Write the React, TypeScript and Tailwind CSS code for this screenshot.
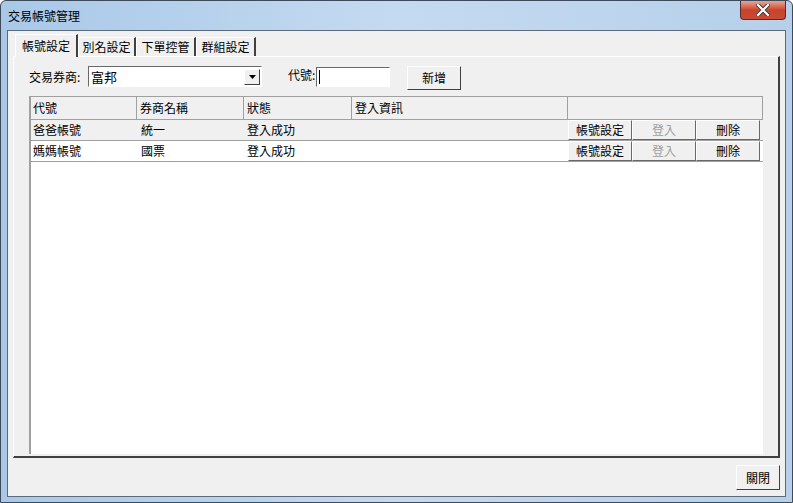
import React from "react";

const font = { fontFamily: '"Noto Sans CJK TC", "Noto Sans", sans-serif' };

const rows = [
  { id: "爸爸帳號", broker: "統一", status: "登入成功", bg: "bg-[#f0f0f0]" },
  { id: "媽媽帳號", broker: "國票", status: "登入成功", bg: "bg-white" },
];

const tabs = [
  { text: "帳號設定", w: "w-[63px]", active: true },
  { text: "別名設定", w: "w-[58px]" },
  { text: "下單控管", w: "w-[60px]" },
  { text: "群組設定", w: "w-[60px]" },
];

const RowButton = ({ text, disabled }: { text: string; disabled?: boolean }) => (
  <div
    className={`w-[64px] h-[20px] flex items-center justify-center bg-[#f0f0f0] border border-t-white border-l-white border-r-[#696969] border-b-[#696969] text-[12px] ${
      disabled ? "text-[#a0a0a0]" : "text-black"
    }`}
  >
    {text}
  </div>
);

export default function App() {
  return (
    <div style={font} className="w-[793px] h-[503px] flex flex-col bg-gradient-to-r from-[#a9c8e8] via-[#c4daf0] to-[#b6d0ea] rounded-t-[6px] border border-[#3c4a5a] overflow-hidden text-black">
      {/* Title bar */}
      <div className="h-[29px] flex items-start justify-between">
        <div className="pl-[7px] pt-[6px] text-[12px] text-black">交易帳號管理</div>
        <div className="mr-[6px] w-[46px] h-[19px] rounded-b-[4px] border border-t-0 border-[#5a2a2a] bg-gradient-to-b from-[#e8a595] via-[#c9432c] to-[#c74a35] flex items-center justify-center">
          <svg width="14" height="12" viewBox="0 0 14 12">
            <path d="M2 1 L12 11 M12 1 L2 11" stroke="#3a3a3a" strokeWidth="4" strokeLinecap="square" />
            <path d="M2 1 L12 11 M12 1 L2 11" stroke="white" strokeWidth="2.2" strokeLinecap="square" />
          </svg>
        </div>
      </div>

      {/* Client area */}
      <div className="flex-1 mx-[6px] mb-[5px] bg-[#f0f0f0] border border-[#5a6b7d] flex flex-col px-[5px] pt-[2px]">
        {/* Tab strip */}
        <div className="h-[23px] flex items-end pl-[2px]">
          {tabs.map((t) =>
            t.active ? (
              <div key={t.text} className={`${t.w} h-[23px] flex items-center justify-center bg-[#f0f0f0] border-t border-l border-white border-r-2 border-r-[#404040] relative z-10 -mb-px text-[12px]`}>
                {t.text}
              </div>
            ) : (
              <div key={t.text} className={`${t.w} h-[19px] mt-[3px] flex items-center justify-center bg-[#f0f0f0] border-t border-l border-white border-r-2 border-r-[#404040] text-[12px]`}>
                {t.text}
              </div>
            )
          )}
        </div>

        {/* Tab panel */}
        <div className="h-[402px] border-t border-l border-white border-r-2 border-b-2 border-r-[#404040] border-b-[#404040] flex flex-col pl-[15px] pr-[14px]">
          {/* Form row */}
          <div className="h-[39px] flex items-center text-[12px]">
            <span className="w-[59px] pt-[1px]">交易券商:</span>
            <div className="w-[174px] h-[21px] bg-white border border-t-[#696969] border-l-[#696969] border-r-white border-b-white flex items-center justify-between pl-[2px] pr-[1px]">
              <span className="text-[13px]">富邦</span>
              <div className="w-[16px] h-[16px] bg-[#f0f0f0] border border-t-white border-l-white border-r-[#404040] border-b-[#404040] flex items-center justify-center">
                <svg width="7" height="4" viewBox="0 0 7 4">
                  <path d="M0 0 H7 L3.5 4 Z" fill="black" />
                </svg>
              </div>
            </div>
            <span className="ml-[26px] w-[28px] pb-[3px]">代號:</span>
            <div className="w-[74px] h-[20px] bg-white border border-t-[#696969] border-l-[#696969] border-r-white border-b-white flex items-center pl-[2px]">
              <div className="w-px h-[14px] bg-black" />
            </div>
            <div className="ml-[17px] mt-[3px] w-[54px] h-[24px] bg-[#f0f0f0] border border-t-white border-l-white border-r-[#404040] border-b-[#404040] flex items-center justify-center text-[12px]">
              新增
            </div>
          </div>

          {/* Grid */}
          <div className="w-[734px] h-[358px] bg-white border-l-2 border-[#a0a0a0] flex flex-col text-[12px]">
            <div className="h-[24px] flex bg-[#f0f0f0] border-y border-[#a0a0a0]">
              <div className="w-[106px] border-r border-[#a0a0a0] pl-[2px] flex items-center">代號</div>
              <div className="w-[107px] border-r border-[#a0a0a0] pl-[3px] flex items-center">券商名稱</div>
              <div className="w-[108px] border-r border-[#a0a0a0] pl-[3px] flex items-center">狀態</div>
              <div className="w-[216px] border-r border-[#a0a0a0] pl-[3px] flex items-center">登入資訊</div>
              <div className="flex-1 border-r border-[#a0a0a0]" />
            </div>
            {rows.map((r) => (
              <div key={r.id} className={`h-[21px] flex border-b border-[#a0a0a0] ${r.bg}`}>
                <div className="w-[107px] pl-[2px] flex items-center">{r.id}</div>
                <div className="w-[107px] pl-[3px] flex items-center">{r.broker}</div>
                <div className="w-[323px] pl-[2px] flex items-center">{r.status}</div>
                <div className="flex">
                  <RowButton text="帳號設定" />
                  <RowButton text="登入" disabled />
                  <RowButton text="刪除" />
                </div>
              </div>
            ))}
          </div>
        </div>

        {/* Bottom bar */}
        <div className="flex-1 flex items-start justify-end pt-[7px]">
          <div className="w-[44px] h-[25px] bg-[#f0f0f0] border border-t-white border-l-white border-r-[#404040] border-b-[#404040] flex items-center justify-center text-[12px]">
            關閉
          </div>
        </div>
      </div>
    </div>
  );
}
